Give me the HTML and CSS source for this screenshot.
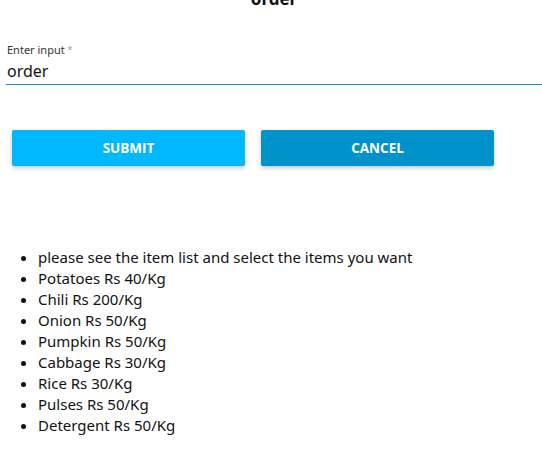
FILE: index.html
```html
<!DOCTYPE html>
<html>
<head>
<meta charset="utf-8">
<link rel="stylesheet" href="styles.css">
</head>
<body>
<div class="page">
  <h2 class="title">order</h2>
  <div class="field">
    <label class="label">Enter input <span class="req">*</span></label>
    <div class="value">order</div>
  </div>
  <div class="actions">
    <button class="btn btn-submit">SUBMIT</button>
    <button class="btn btn-cancel">CANCEL</button>
  </div>
  <ul class="items">
    <li>please see the item list and select the items you want</li>
    <li>Potatoes Rs 40/Kg</li>
    <li>Chili Rs 200/Kg</li>
    <li>Onion Rs 50/Kg</li>
    <li>Pumpkin Rs 50/Kg</li>
    <li>Cabbage Rs 30/Kg</li>
    <li>Rice Rs 30/Kg</li>
    <li>Pulses Rs 50/Kg</li>
    <li>Detergent Rs 50/Kg</li>
  </ul>
</div>
</body>
</html>
```

FILE: styles.css
```css
html, body {
  margin: 0;
  padding: 0;
  background: #ffffff;
}
body {
  font-family: "Noto Sans", "Open Sans", sans-serif;
  color: #111;
  overflow: hidden;
}
.page {
  padding: 0 0 0 6px;
}
.title {
  margin: -12px 0 0 0;
  text-align: center;
  font-size: 17px;
  line-height: 22px;
  font-weight: 700;
  color: #111;
}
.field {
  margin-top: 32px;
  border-bottom: 1px solid #1a8cb8;
  padding: 0 0 3px 1px;
}
.label {
  display: block;
  font-size: 11px;
  line-height: 15px;
  margin-bottom: 4px;
  color: #333;
}
.req {
  color: #999;
  font-size: 9px;
  vertical-align: top;
}
.value {
  font-size: 16px;
  line-height: 20px;
  color: #111;
}
.actions {
  display: flex;
  gap: 16px;
  margin-top: 45px;
  padding-left: 6px;
}
.btn {
  width: 233px;
  height: 36px;
  border: none;
  border-radius: 2px;
  color: #fff;
  font-family: "Open Sans", "Noto Sans", sans-serif;
  font-weight: 700;
  font-size: 13.5px;
  box-shadow: 0 2px 4px rgba(0,0,0,0.22);
}
.btn-submit { background: #00b8ff; }
.btn-cancel { background: #0093cb; }
.items {
  margin: 81px 0 0 0;
  padding-left: 32px;
  font-size: 15px;
  line-height: 21px;
  color: #111;
}
```
